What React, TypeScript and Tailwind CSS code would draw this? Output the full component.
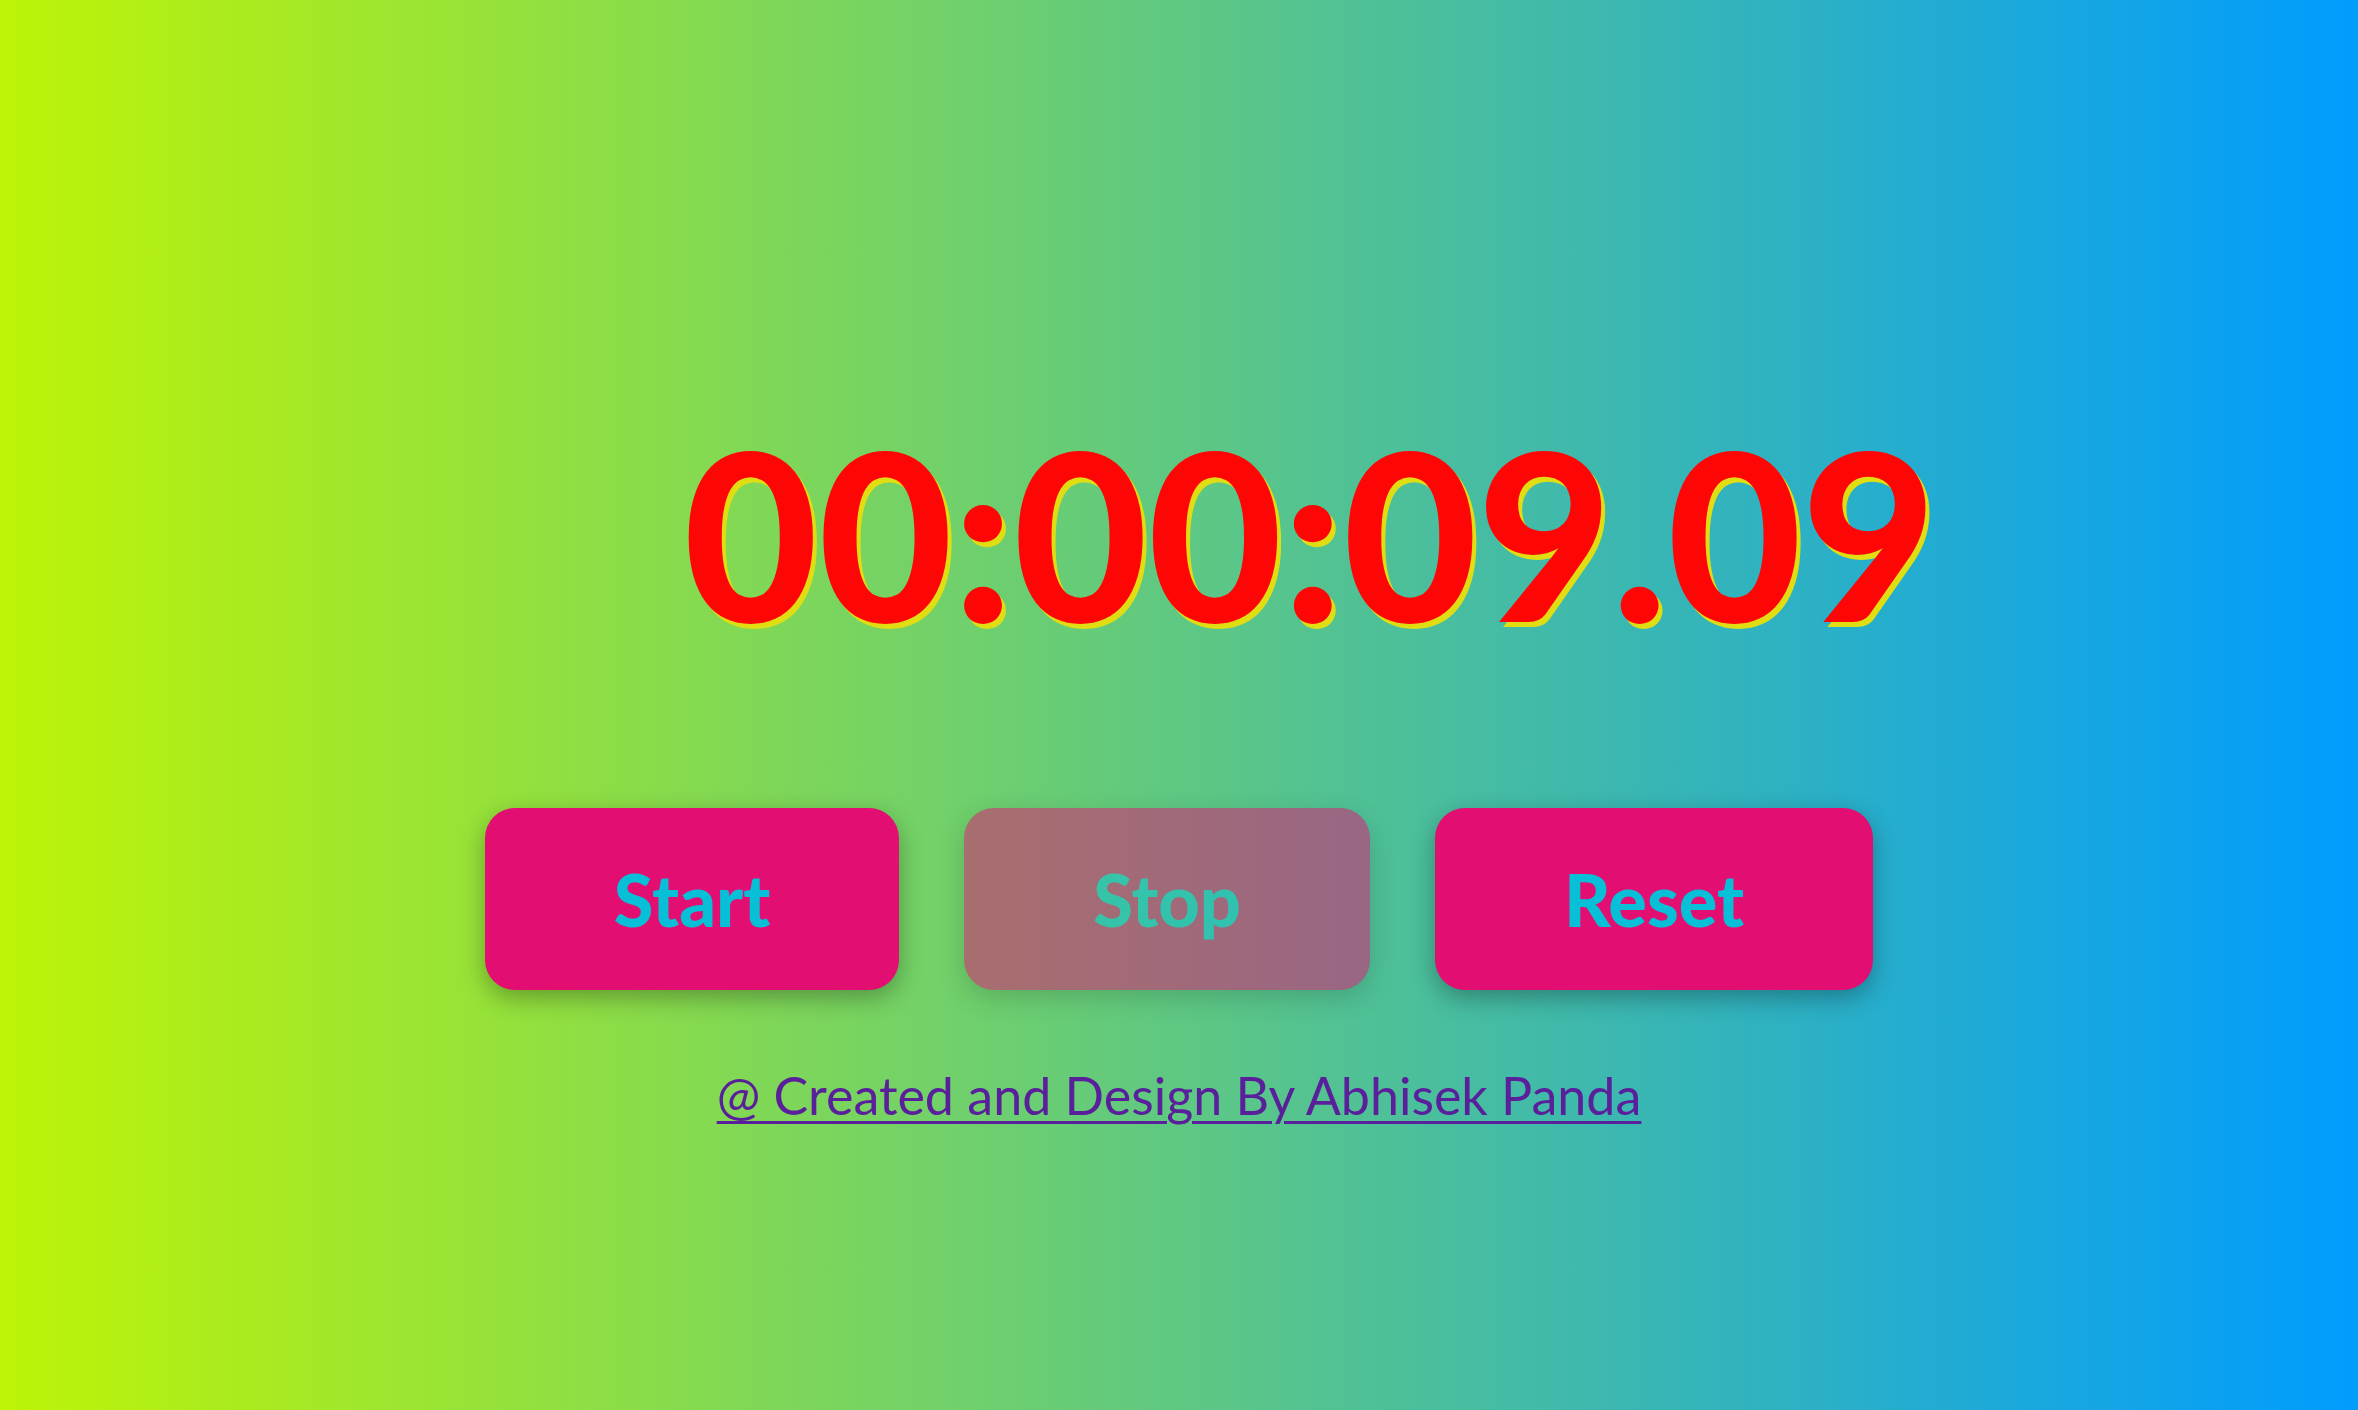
import React, { useState } from "react";

const Btn = ({ label, disabled }: { label: string; disabled?: boolean }) => (
  <button
    disabled={disabled}
    className={`h-[182px] px-[129px] rounded-[30px] bg-[#e20e72] text-[#08bfd8] text-[72px] font-black leading-none shadow-[0_8px_24px_rgba(0,0,0,0.3)] ${
      disabled ? "opacity-50" : ""
    }`}
  >
    {label}
  </button>
);

export default function App() {
  const [time] = useState("00:00:09.09");

  return (
    <div className="w-full h-[1410px] bg-[linear-gradient(to_right,#bdf406,#009cff)] flex flex-col items-center font-['Lato',sans-serif]">
      <div className="mt-[416px] pl-[262px] w-full flex justify-center">
        <h1 className="text-[#ff0606] text-[232px] font-black leading-none [text-shadow:4px_5px_0_#e0de12]">
          {time}
        </h1>
      </div>
      <div className="mt-[160px] flex gap-[65px]">
        <Btn label="Start" />
        <Btn label="Stop" disabled />
        <Btn label="Reset" />
      </div>
      <a
        href="#"
        className="mt-[66px] text-[#5a1f9a] text-[52px] underline decoration-[3px] underline-offset-[6px]"
      >
        @ Created and Design By Abhisek Panda
      </a>
    </div>
  );
}
